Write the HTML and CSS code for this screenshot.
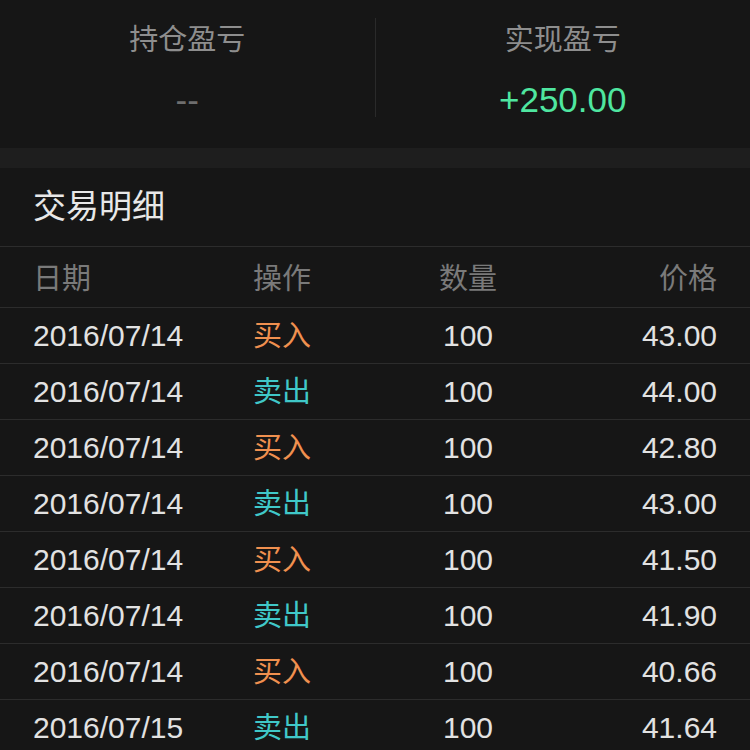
FILE: index.html
```html
<html lang="zh-CN">
  <head>
    <meta charset="UTF-8" />
    <meta name="viewport" content="width=device-width, initial-scale=1.0" />
    <title>交易明细</title>
    <link rel="stylesheet" href="styles.css">
  </head>
  <body>
    <div class="stats">
      <div class="stat">
        <div class="stat-label">持仓盈亏</div>
        <div class="stat-value empty">--</div>
      </div>
      <div class="stat">
        <div class="stat-label">实现盈亏</div>
        <div class="stat-value up">+250.00</div>
      </div>
    </div>
    <div class="gap"></div>
    <div class="section">
      <h2 class="section-title">交易明细</h2>
      <div class="row head">
        <span>日期</span>
        <span>操作</span>
        <span class="qty">数量</span>
        <span class="price">价格</span>
      </div>
      <div class="row">
        <span>2016/07/14</span>
        <span class="buy">买入</span>
        <span class="qty">100</span>
        <span class="price">43.00</span>
      </div>
      <div class="row">
        <span>2016/07/14</span>
        <span class="sell">卖出</span>
        <span class="qty">100</span>
        <span class="price">44.00</span>
      </div>
      <div class="row">
        <span>2016/07/14</span>
        <span class="buy">买入</span>
        <span class="qty">100</span>
        <span class="price">42.80</span>
      </div>
      <div class="row">
        <span>2016/07/14</span>
        <span class="sell">卖出</span>
        <span class="qty">100</span>
        <span class="price">43.00</span>
      </div>
      <div class="row">
        <span>2016/07/14</span>
        <span class="buy">买入</span>
        <span class="qty">100</span>
        <span class="price">41.50</span>
      </div>
      <div class="row">
        <span>2016/07/14</span>
        <span class="sell">卖出</span>
        <span class="qty">100</span>
        <span class="price">41.90</span>
      </div>
      <div class="row">
        <span>2016/07/14</span>
        <span class="buy">买入</span>
        <span class="qty">100</span>
        <span class="price">40.66</span>
      </div>
      <div class="row">
        <span>2016/07/15</span>
        <span class="sell">卖出</span>
        <span class="qty">100</span>
        <span class="price">41.64</span>
      </div>
    </div>
  </body>
</html>
```

FILE: styles.css
```css
*,
::before,
::after {
  box-sizing: border-box;
}

body {
  margin: 0;
  font-family: "Liberation Sans", "Noto Sans CJK SC", sans-serif;
  background-color: #161616;
  color: #e2e2e2;
  overflow: hidden;
}

.stats {
  display: flex;
  padding: 18px 0 31px;
}

.stat {
  flex: 1;
  height: 99px;
  text-align: center;
  padding-top: 7px;
}

.stat + .stat {
  border-left: 1px solid #2a2a2a;
}

.stat-label {
  font-size: 29px;
  line-height: 30px;
  color: #8e8e8e;
}

.stat-value {
  margin-top: 25px;
  font-size: 35px;
  line-height: 40px;
}

.stat-value.empty {
  color: #6e6e6e;
}

.stat-value.up {
  color: #4fe6a0;
}

.gap {
  height: 20px;
  background-color: #1e1e1e;
}

.section-title {
  margin: 0;
  height: 79px;
  line-height: 78px;
  padding-left: 33px;
  font-size: 33px;
  font-weight: normal;
  color: #e8e8e8;
  border-bottom: 1px solid #2c2c2c;
}

.row {
  display: grid;
  grid-template-columns: 220px 140px 150px 1fr;
  align-items: center;
  height: 56px;
  padding: 0 33px;
  font-size: 30px;
  line-height: 34px;
  border-bottom: 1px solid #2c2c2c;
}

.row.head {
  height: 61px;
  padding-top: 3px;
  font-size: 29px;
  color: #7a7a7a;
}

.qty {
  text-align: center;
}

.price {
  text-align: right;
}

.buy,
.sell {
  font-size: 29px;
}

.buy {
  color: #f0904f;
}

.sell {
  color: #40c8c8;
}
```
